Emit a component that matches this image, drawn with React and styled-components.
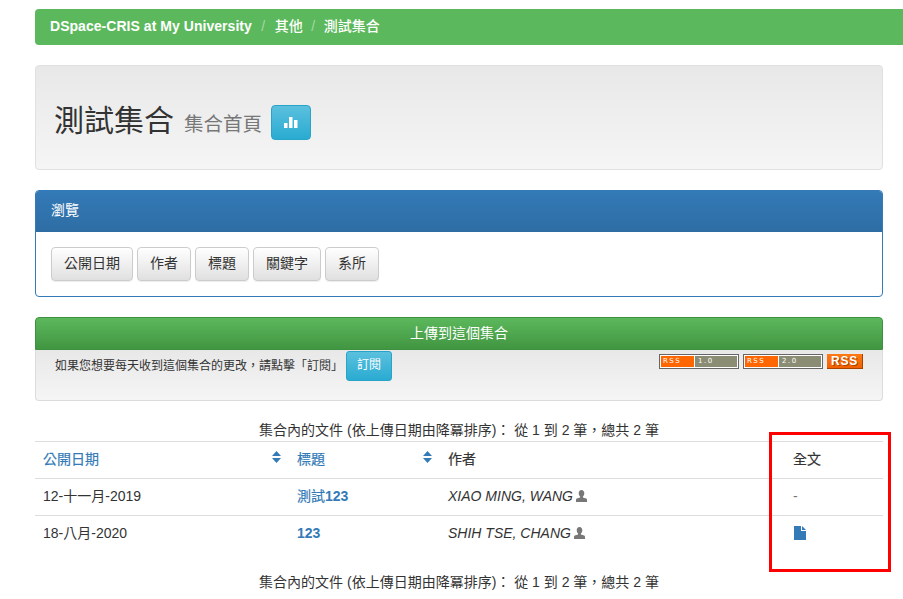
import React from "react";
import styled, { createGlobalStyle } from "styled-components";

const GlobalStyle = createGlobalStyle`
  html, body {
    margin: 0;
    padding: 0;
    height: 599px;
    overflow: hidden;
    background: #fff;
  }
  body {
    font-family: "Liberation Sans", "Noto Sans CJK TC", sans-serif;
    font-size: 14px;
    line-height: 20px;
    color: #333;
  }
  * {
    box-sizing: border-box;
  }
`;

const Page = styled.div`
  position: relative;
  padding: 9px 20px 0 35px;
`;

const Breadcrumb = styled.div`
  display: flex;
  align-items: center;
  height: 36px;
  margin-right: -40px;
  margin-bottom: 20px;
  padding: 0 15px 3px;
  background: #5cb85c;
  border-radius: 4px;
  color: #fff;
  font-weight: 500;
`;

const Brand = styled.span`
  font-weight: bold;
  letter-spacing: 0.04px;
`;

const Divider = styled.span`
  padding: 0 ${(props) => (props.$tight ? "8.5px" : "9.5px")};
  color: #a5d8a5;
  font-weight: normal;
`;

const Jumbotron = styled.div`
  display: flex;
  align-items: center;
  height: 105px;
  margin-bottom: 20px;
  padding: 10px 20px 0 18px;
  background: linear-gradient(to bottom, #e8e8e8, #f5f5f5);
  border: 1px solid #e0e0e0;
  border-radius: 4px;
`;

const Title = styled.h1`
  margin: 0;
  font-size: 30px;
  font-weight: normal;
  line-height: 36px;
`;

const Subtitle = styled.small`
  margin-left: 10px;
  font-size: 19.5px;
  color: #777;
`;

const StatsButton = styled.div`
  display: flex;
  align-items: center;
  justify-content: center;
  width: 40px;
  height: 35px;
  margin-left: 9px;
  background: linear-gradient(to bottom, #5bc0de, #2aabd2);
  border: 1px solid #28a4c9;
  border-radius: 4px;
`;

const Panel = styled.div`
  margin-bottom: 20px;
  border: 1px solid #337ab7;
  border-radius: 4px;
  overflow: hidden;
`;

const PanelHeading = styled.div`
  height: 41px;
  padding: 9px 15px;
  background: linear-gradient(to bottom, #337ab7, #2e6da4);
  color: #fff;
`;

const PanelBody = styled.div`
  display: flex;
  gap: 4px;
  padding: 15px;
`;

const BrowseButton = styled.div`
  padding: 5px 12px;
  height: 34px;
  background: linear-gradient(to bottom, #fff, #e0e0e0);
  border: 1px solid #ccc;
  border-radius: 4px;
  box-shadow: 0 1px 1px rgba(0, 0, 0, 0.075);
`;

const UploadButton = styled.div`
  height: 33px;
  padding-top: 5px;
  background: linear-gradient(to bottom, #5cb85c, #419641);
  border: 1px solid #3e8f3e;
  border-radius: 4px 4px 0 0;
  color: #fff;
  text-align: center;
`;

const Well = styled.div`
  display: flex;
  justify-content: space-between;
  height: 51px;
  margin-bottom: 19px;
  padding: 0 19px 0 19px;
  background: linear-gradient(to bottom, #e8e8e8, #f5f5f5);
  border: 1px solid #dcdcdc;
  border-top: 0;
  border-radius: 0 0 4px 4px;
`;

const SubscribeText = styled.div`
  display: flex;
  align-items: flex-start;
  gap: 3px;
  font-size: 12px;
  line-height: 32px;
`;

const SubscribeButton = styled.div`
  width: 46px;
  height: 30px;
  margin-top: 1px;
  background: linear-gradient(to bottom, #5bc0de, #2aabd2);
  border: 1px solid #28a4c9;
  border-radius: 3px;
  color: #fff;
  line-height: 26px;
  text-align: center;
`;

const Feeds = styled.div`
  display: flex;
  gap: 4px;
  padding-top: 4px;
`;

const FeedBadge = styled.div`
  display: flex;
  width: 80px;
  height: 15px;
  padding: 1px;
  gap: 1px;
  background: #fff;
  border: 1px solid #666;
  font-family: "DejaVu Sans", sans-serif;
  font-size: 7px;
  line-height: 11px;
  letter-spacing: 1.5px;
  color: #fff;
`;

const FeedName = styled.span`
  width: 33px;
  padding-left: 2px;
  background: #f60;
`;

const FeedVersion = styled.span`
  flex: 1;
  padding-left: 3px;
  background: #8a8d74;
`;

const RssBadge = styled.div`
  width: 36px;
  height: 15px;
  background: linear-gradient(to bottom, #ff7a14, #f16000);
  border-right: 1px solid #a84300;
  border-bottom: 1px solid #a84300;
  color: #fff;
  font-size: 12px;
  font-weight: bold;
  line-height: 14px;
  letter-spacing: 0.8px;
  text-align: center;
  text-shadow: 1px 1px 0 #a84300;
`;

const Caption = styled.div`
  height: 21px;
  text-align: center;
`;

const Table = styled.table`
  width: 848px;
  margin-bottom: 19px;
  border-collapse: collapse;
  table-layout: fixed;

  th,
  td {
    height: 37px;
    padding: 7px 8px 8px;
    border-top: 1px solid #ddd;
    text-align: left;
    vertical-align: top;
  }

  th {
    font-weight: normal;
    -webkit-text-stroke: 0.2px currentColor;
  }
`;

const HeadLink = styled.div`
  display: flex;
  justify-content: space-between;
  color: ${(props) => (props.$plain ? "#333" : "#337ab7")};
`;

const TitleLink = styled.span`
  color: #337ab7;
  font-weight: bold;
`;

const TitleCjk = styled.span`
  font-weight: normal;
  -webkit-text-stroke: 0.2px currentColor;
`;

const Author = styled.em`
  font-style: italic;
`;

const UserIcon = styled.svg`
  margin-left: 3px;
  vertical-align: -1px;
`;

const Dash = styled.span`
  color: #777;
`;

const FileIcon = styled.svg`
  display: block;
  margin: 3px 0 0 1px;
`;

const Marker = styled.div`
  position: absolute;
  left: 769px;
  top: 432px;
  width: 122px;
  height: 140px;
  border: 3px solid #f00;
`;

const SortIcon = () => (
  <svg width="9" height="12" viewBox="0 0 9 12" style={{ marginTop: 2 }}>
    <path d="M4.5 0L9 5H0zM0 7h9l-4.5 5z" fill="#337ab7" />
  </svg>
);

const Person = () => (
  <UserIcon width="11" height="12" viewBox="0 0 11 12">
    <path
      d="M5.5 0C7.3 0 8.3 1.3 8.3 3.2 8.3 4.7 7.6 6 6.9 6.5V7.4L10.2 8.6C10.8 8.9 11 9.4 11 10V12H0V10C0 9.4.2 8.9.8 8.6L4.1 7.4V6.5C3.4 6 2.7 4.7 2.7 3.2 2.7 1.3 3.7 0 5.5 0z"
      fill="#777"
    />
  </UserIcon>
);

const rows = [
  { date: "12-十一月-2019", cjk: "測試", title: "123", author: "XIAO MING, WANG", file: false },
  { date: "18-八月-2020", cjk: "", title: "123", author: "SHIH TSE, CHANG", file: true },
];

const App = () => (
  <Page>
    <GlobalStyle />
    <Breadcrumb>
      <Brand>DSpace-CRIS at My University</Brand>
      <Divider>/</Divider>
      其他
      <Divider $tight>/</Divider>
      測試集合
    </Breadcrumb>

    <Jumbotron>
      <Title>
        測試集合<Subtitle>集合首頁</Subtitle>
      </Title>
      <StatsButton>
        <svg width="14" height="13" viewBox="0 0 14 13">
          <path d="M0 7h3.5v5H0zM5 1h3.5v11H5zM10 4h3.5v8H10z" fill="#fff" />
        </svg>
      </StatsButton>
    </Jumbotron>

    <Panel>
      <PanelHeading>瀏覽</PanelHeading>
      <PanelBody>
        {["公開日期", "作者", "標題", "關鍵字", "系所"].map((label) => (
          <BrowseButton key={label}>{label}</BrowseButton>
        ))}
      </PanelBody>
    </Panel>

    <UploadButton>上傳到這個集合</UploadButton>
    <Well>
      <SubscribeText>
        如果您想要每天收到這個集合的更改，請點擊「訂閱」
        <SubscribeButton>訂閱</SubscribeButton>
      </SubscribeText>
      <Feeds>
        <FeedBadge>
          <FeedName>RSS</FeedName>
          <FeedVersion>1.0</FeedVersion>
        </FeedBadge>
        <FeedBadge>
          <FeedName>RSS</FeedName>
          <FeedVersion>2.0</FeedVersion>
        </FeedBadge>
        <RssBadge>RSS</RssBadge>
      </Feeds>
    </Well>

    <Caption>集合內的文件 (依上傳日期由降冪排序)： 從 1 到 2 筆，總共 2 筆</Caption>
    <Table>
      <colgroup>
        <col style={{ width: 254 }} />
        <col style={{ width: 151 }} />
        <col style={{ width: 345 }} />
        <col style={{ width: 98 }} />
      </colgroup>
      <thead>
        <tr>
          <th>
            <HeadLink>
              公開日期
              <SortIcon />
            </HeadLink>
          </th>
          <th>
            <HeadLink>
              標題
              <SortIcon />
            </HeadLink>
          </th>
          <th>
            <HeadLink $plain>作者</HeadLink>
          </th>
          <th>
            <HeadLink $plain>全文</HeadLink>
          </th>
        </tr>
      </thead>
      <tbody>
        {rows.map((row) => (
          <tr key={row.date}>
            <td>{row.date}</td>
            <td>
              <TitleLink>
                <TitleCjk>{row.cjk}</TitleCjk>
                {row.title}
              </TitleLink>
            </td>
            <td>
              <Author>{row.author}</Author>
              <Person />
            </td>
            <td>
              {row.file ? (
                <FileIcon width="12" height="14" viewBox="0 0 12 14">
                  <path d="M0 0h7v5h5v9H0zM8 0l4 4H8z" fill="#337ab7" />
                </FileIcon>
              ) : (
                <Dash>-</Dash>
              )}
            </td>
          </tr>
        ))}
      </tbody>
    </Table>
    <Caption>集合內的文件 (依上傳日期由降冪排序)： 從 1 到 2 筆，總共 2 筆</Caption>
    <Marker />
  </Page>
);

export default App;
